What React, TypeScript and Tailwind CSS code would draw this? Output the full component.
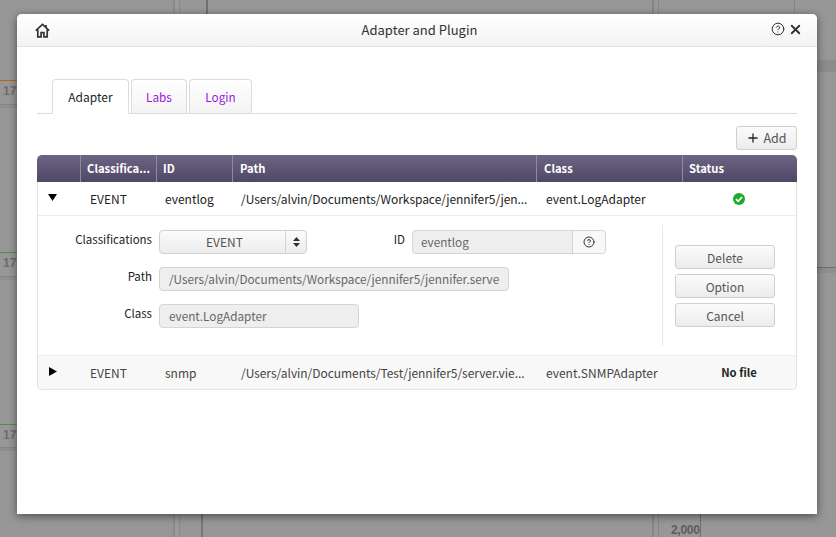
import { CircleHelp, Plus, X } from "lucide-react";

const font = "font-['Noto_Sans_CJK_KR','Noto_Sans',sans-serif]";
const btn = "flex items-center justify-center rounded-[3px] border border-[#cfcfcf] bg-gradient-to-b from-[#fbfbfb] to-[#ececec] text-[#555]";
const field = "flex h-6 items-center rounded-[4px] border border-[#d4d4d4] bg-[#eeeeee] text-[11.75px] text-[#666]";
const clock = "absolute left-[3px] font-['Liberation_Sans'] text-[12px] font-bold leading-none text-[#6c6c6c]";

function Triangle({ open }: { open: boolean }) {
  return (
    <svg width="9" height="9" viewBox="0 0 9 9" className="text-black">
      {open ? <path d="M0 1h9L4.5 8z" fill="currentColor" /> : <path d="M1 0l8 4.5L1 9z" fill="currentColor" />}
    </svg>
  );
}

function Row({ open, cls, id, path, klass, status, dim }: { open: boolean; cls: string; id: string; path: string; klass: string; status: React.ReactNode; dim?: boolean }) {
  return (
    <div className={`flex h-[33px] items-center text-[12px] ${dim ? "rounded-b-[5px] bg-[#f8f8f8] text-[#444]" : "text-[#222]"}`}>
      <div className="flex w-[44px] justify-center pb-[2px] pl-[1px] pr-[16px]"><Triangle open={open} /></div>
      <div className="w-[76px] pl-[8px]">{cls}</div>
      <div className="w-[76px] pl-[7px]">{id}</div>
      <div className="w-[304px] whitespace-nowrap pl-[7px] tracking-[-0.05px]">{path}</div>
      <div className="w-[146px] pl-[8px]">{klass}</div>
      <div className="flex flex-1 justify-center pr-[2px]">{status}</div>
    </div>
  );
}

export default function App() {
  return (
    <div className={`relative h-[537px] w-[836px] overflow-hidden bg-[#979797] pl-[17px] pt-[14px] ${font}`}>
      {/* dimmed dashboard behind the dialog */}
      <div className="absolute left-[173px] top-0 h-full w-[7px] border-l-2 border-r border-[#8a8a8a] bg-[#9a9a9a]" />
      <div className="absolute left-[206px] top-0 h-[14px] w-[2px] bg-[#6f6f6f]" />
      <div className="absolute left-[201px] top-[514px] h-[23px] w-[2px] bg-[#767676]" />
      <div className="absolute left-[652px] top-0 h-full w-[7px] border-l-2 border-r border-[#868686] bg-[#979797]" />
      <div className="absolute left-[700px] top-[514px] h-[23px] w-px bg-[#6f6f6f]" />
      <div className="absolute left-[794px] top-0 h-[14px] w-px bg-[#858585]" />
      <div className="absolute left-[817px] top-[60px] h-[12px] w-[19px] bg-[#8c8c8c]" />
      <div className="absolute left-[817px] top-[267px] h-[6px] w-[19px] border-t border-[#6f6f6f] bg-[#8f8f8f]" />

      <div className="absolute left-0 top-[80px] h-px w-[17px] bg-[#b5651d]" />
      <div className="absolute left-0 top-[252px] h-px w-[17px] bg-[#5d8a3c]" />
      <div className="absolute left-0 top-[424px] h-px w-[17px] bg-[#5d8a3c]" />
      <div className="absolute left-0 top-[104px] h-[4px] w-[17px] border-t border-[#858585] bg-[#8f8f8f]" />
      <div className="absolute left-0 top-[276px] h-[4px] w-[17px] border-t border-[#858585] bg-[#8f8f8f]" />
      <div className="absolute left-0 top-[447px] h-[4px] w-[17px] border-t border-[#858585] bg-[#8f8f8f]" />
      <div className={`${clock} top-[85px]`}>17:</div>
      <div className={`${clock} top-[257px]`}>17:</div>
      <div className={`${clock} top-[429px]`}>17:</div>
      <div className="absolute left-[671px] top-[524px] font-['Liberation_Sans'] text-[12px] font-bold leading-none tracking-[-0.3px] text-[#5e5e5e]">2,000</div>

      <div className="relative h-[500px] w-[800px] rounded-t-[5px] bg-white shadow-[0_2px_8px_rgba(0,0,0,0.5)]">
        <div className="flex h-[33px] items-center rounded-t-[5px] border-b border-[#e4e4e4] bg-gradient-to-b from-white to-[#f3f3f3] pl-[18px] pr-[14px]">
          <svg width="15" height="15" viewBox="0 0 15 15" fill="none" stroke="#333" strokeWidth="1.7">
            <path d="M0.8 7.6 7.5 1.4l6.7 6.2" />
            <path d="M2.8 6.4v7.4h3.3V9.6h2.8v4.2h3.3V6.4" />
            <path d="M11 2v2.6" />
          </svg>
          <div className="flex-1 pl-[18px] text-center text-[13px] text-[#333]">Adapter and Plugin</div>
          <CircleHelp size={14} strokeWidth={1.7} className="-mt-[2px] mr-[3px] text-[#333]" />
          <X size={15} strokeWidth={3} className="-mt-[2px] text-[#333]" />
        </div>

        <div className="px-5 pt-[32px]">
          <div className="flex h-[35px] items-end gap-[2px] border-b border-[#dcdcdc] pl-[15px] text-[11.75px]">
            <div className="-mb-px flex h-[35px] w-[77px] items-center justify-center rounded-t-[4px] border border-b-0 border-[#dcdcdc] bg-white text-[12px] text-[#222]">Adapter</div>
            <div className="flex h-[34px] w-[56px] items-center justify-center rounded-t-[4px] border border-b-0 border-[#dcdcdc] bg-gradient-to-b from-white to-[#f3f3f3] text-[#9b18e0]">Labs</div>
            <div className="flex h-[34px] w-[63px] items-center justify-center rounded-t-[4px] border border-b-0 border-[#dcdcdc] bg-gradient-to-b from-white to-[#f3f3f3] text-[#9b18e0]">Login</div>
          </div>

          <div className="flex justify-end pt-3">
            <button className={`${btn} h-6 w-[61px] gap-[3px] text-[12.5px] text-[#555]`}>
              <Plus size={14} strokeWidth={2.2} className="text-[#222]" />
              Add
            </button>
          </div>

          <div className="mt-[5px] h-[235px] rounded-[5px] border-x border-b border-[#e2e2e2]">
            <div className="-mx-px flex h-[27px] rounded-t-[5px] bg-gradient-to-b from-[#6d6583] to-[#4f4765] text-[11.25px] font-bold leading-[27px] text-white">
              <div className="w-[44px] border-r border-[#8f89a5]" />
              <div className="w-[76px] border-r border-[#8f89a5] pl-[6px]">Classifica...</div>
              <div className="w-[76px] border-r border-[#8f89a5] pl-[6px]">ID</div>
              <div className="w-[304px] border-r border-[#8f89a5] pl-[7px]">Path</div>
              <div className="w-[146px] border-r border-[#8f89a5] pl-[7px]">Class</div>
              <div className="flex-1 pl-[6px]">Status</div>
            </div>

            <Row
              open
              cls="EVENT"
              id="eventlog"
              path="/Users/alvin/Documents/Workspace/jennifer5/jen..."
              klass="event.LogAdapter"
              status={
                <svg width="12" height="12" viewBox="0 0 12 12">
                  <circle cx="6" cy="6" r="6" fill="#1dab2c" />
                  <path d="M3 6.2l2.1 2.1L9 4.2" fill="none" stroke="#fff" strokeWidth="1.8" />
                </svg>
              }
            />

            <div className="flex h-[141px] border-y border-[#ececec] text-[11.5px] text-[#222]">
              <div className="w-[624px] pt-[14px]">
                <div className="flex h-6 items-center">
                  <div className="w-[114px] pb-[4px] text-right">Classifications</div>
                  <div className={`${btn} ml-[7px] h-6 w-[148px] rounded-[4px] text-[12px]`}>
                    <div className="flex-1 pl-[4px] text-center">EVENT</div>
                    <div className="flex h-full w-[21px] items-center justify-center border-l border-[#d4d4d4]">
                      <svg width="7" height="10" viewBox="0 0 7 10" fill="#333">
                        <path d="M3.5 0 7 4H0z" />
                        <path d="M3.5 10 7 6H0z" />
                      </svg>
                    </div>
                  </div>
                  <div className="ml-[71px] w-[27px] pb-[4px] text-right">ID</div>
                  <div className={`${field} ml-[7px] w-[194px] pl-[8px]`}>
                    <div className="flex-1">eventlog</div>
                    <div className="flex h-full w-[33px] items-center justify-center rounded-r-[4px] border-l border-[#d4d4d4] bg-[#f8f8f8]">
                      <CircleHelp size={12} strokeWidth={2} className="text-[#333]" />
                    </div>
                  </div>
                </div>
                <div className="mt-[13px] flex h-6 items-center">
                  <div className="w-[114px] pb-[4px] text-right">Path</div>
                  <div className={`${field} ml-[7px] w-[350px] whitespace-nowrap pl-[9px]`}>/Users/alvin/Documents/Workspace/jennifer5/jennifer.serve</div>
                </div>
                <div className="mt-[13px] flex h-6 items-center">
                  <div className="w-[114px] pb-[4px] text-right">Class</div>
                  <div className={`${field} ml-[7px] w-[200px] pl-[9px]`}>event.LogAdapter</div>
                </div>
              </div>
              <div className="my-[9px] flex w-[134px] flex-col gap-[5px] border-l border-[#e8e8e8] pl-[12px] pt-[20px] text-[12px]">
                <button className={`${btn} h-6 w-[100px] pt-px`}>Delete</button>
                <button className={`${btn} h-6 w-[100px] pt-px`}>Option</button>
                <button className={`${btn} h-6 w-[100px] pt-px`}>Cancel</button>
              </div>
            </div>

            <Row
              open={false}
              dim
              cls="EVENT"
              id="snmp"
              path="/Users/alvin/Documents/Test/jennifer5/server.vie..."
              klass="event.SNMPAdapter"
              status={<span className="text-[11.25px] font-bold text-[#222]">No file</span>}
            />
          </div>
        </div>
      </div>
    </div>
  );
}
